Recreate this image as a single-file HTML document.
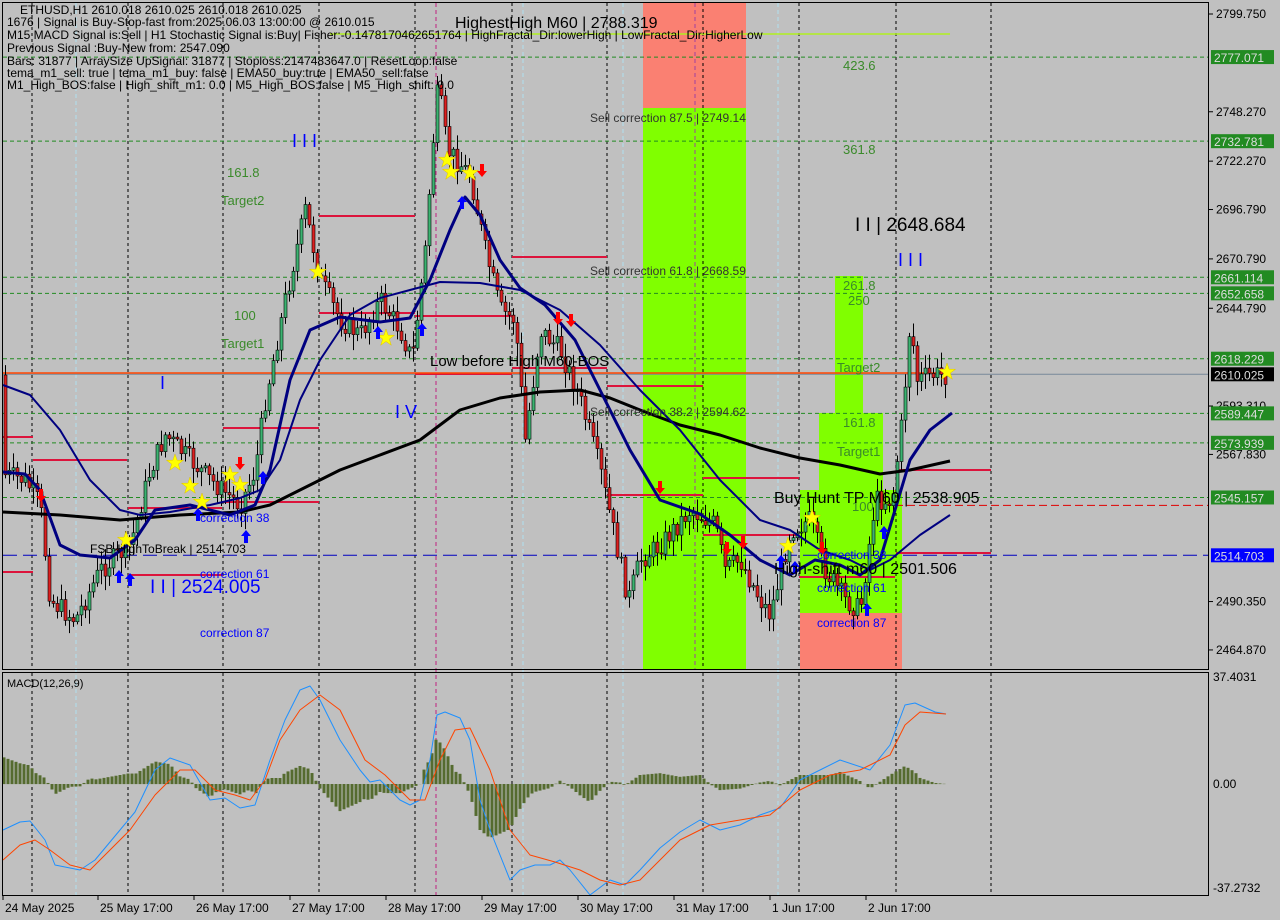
<!DOCTYPE html>
<html><head><meta charset="utf-8"><style>
html,body{margin:0;padding:0;background:#c0c0c0;}
svg{display:block;font-family:"Liberation Sans",sans-serif;}
</style></head><body>
<svg id="s" width="1280" height="920" xmlns="http://www.w3.org/2000/svg">
<rect width="1280" height="920" fill="#c0c0c0"/>
<rect x="643" y="2" width="103" height="106" fill="#fa8072"/>
<rect x="643" y="108" width="103" height="561" fill="#80ff00"/>
<rect x="835" y="276" width="28" height="137" fill="#80ff00"/>
<rect x="819" y="413" width="64" height="80" fill="#80ff00"/>
<rect x="800" y="490" width="102" height="123" fill="#80ff00"/>
<rect x="800" y="613" width="102" height="56" fill="#fa8072"/>
<g id="grid"></g>
<g id="lines"></g>
<g id="candles"></g>
<g id="over"></g>
<rect x="2.5" y="2.5" width="1206" height="667" fill="none" stroke="#000"/>
<rect x="2.5" y="672.5" width="1206" height="223" fill="none" stroke="#000"/>
<g font-size="12" fill="#000">
<text x="20" y="14">ETHUSD,H1  2610.018 2610.025 2610.018 2610.025</text>
<text x="7" y="26">1676 | Signal is Buy-Stop-fast from:2025.06.03 13:00:00 @ 2610.015</text>
<text x="7" y="39">M15 MACD Signal is:Sell | H1 Stochastic Signal is:Buy| Fisher:-0.1478170462651764 | HighFractal_Dir:lowerHigh | LowFractal_Dir:HigherLow</text>
<text x="7" y="52">Previous Signal :Buy-New from: 2547.090</text>
<text x="7" y="65">Bars: 31877 | ArraySize UpSignal: 31877 | Stoploss:2147483647.0 | ResetLoop:false</text>
<text x="7" y="77">tema_m1_sell: true | tema_m1_buy: false | EMA50_buy:true | EMA50_sell:false</text>
<text x="7" y="89">M1_High_BOS:false | High_shift_m1: 0.0 | M5_High_BOS:false | M5_High_shift: 0.0</text>
<text x="455" y="28" font-size="16">HighestHigh   M60 | 2788.319</text>
<text x="7" y="687" font-size="11">MACD(12,26,9)</text>
</g>
<g font-size="13" fill="#3a8a2a">
<text x="843" y="70">423.6</text><text x="843" y="154">361.8</text>
<text x="843" y="290">261.8</text><text x="848" y="305">250</text>
<text x="837" y="372">Target2</text><text x="843" y="427">161.8</text>
<text x="837" y="456">Target1</text><text x="852" y="511">100</text>
<text x="227" y="177">161.8</text><text x="221" y="205">Target2</text>
<text x="234" y="320">100</text><text x="221" y="348">Target1</text>
</g>
<g font-size="12" fill="#333">
<text x="590" y="122">Sell correction 87.5 | 2749.14</text>
<text x="590" y="275">Sell correction 61.8 | 2668.59</text>
<text x="590" y="416">Sell correction 38.2 | 2594.62</text>
</g>
<g fill="#000">
<text x="855" y="231" font-size="19">I I | 2648.684</text>
<text x="430" y="366" font-size="15">Low before High  M60-BOS</text>
<text x="774" y="503" font-size="16">Buy Hunt TP M60 | 2538.905</text>
<text x="774" y="574" font-size="16">High-shift m60 | 2501.506</text>
<text x="90" y="553" font-size="12">FSB-HighToBreak | 2514.703</text>
</g>
<g fill="#0000ff">
<text x="292" y="147" font-size="18">I I I</text>
<text x="898" y="266" font-size="18">I I I</text>
<text x="160" y="389" font-size="18">I</text>
<text x="395" y="418" font-size="18">I V</text>
<text x="150" y="593" font-size="19">I I | 2524.005</text>
<text x="200" y="522" font-size="12">correction 38</text>
<text x="200" y="578" font-size="12">correction 61</text>
<text x="200" y="637" font-size="12">correction 87</text>
<text x="817" y="559" font-size="12">correction 38</text>
<text x="817" y="592" font-size="12">correction 61</text>
<text x="817" y="627" font-size="12">correction 87</text>
</g>
<g id="axis" font-size="12" fill="#000"></g>
</svg>
<script>
(function(){
var NS="http://www.w3.org/2000/svg";
function el(p,t,a){var e=document.createElementNS(NS,t);for(var k in a)e.setAttribute(k,a[k]);document.getElementById(p).appendChild(e);return e;}
function Y(p){return 14+(2799.75-p)*1.899;}
[32,128,223,319,415,512,607,703,799,896,991].forEach(function(x){
 el('grid','line',{x1:x,y1:3,x2:x,y2:669,stroke:'#000','stroke-dasharray':'3,3'});
 el('grid','line',{x1:x,y1:673,x2:x,y2:895,stroke:'#000','stroke-dasharray':'3,3'});
});
[76,523,623,778].forEach(function(x){el('grid','line',{x1:x,y1:3,x2:x,y2:895,stroke:'#b0e0f0','stroke-dasharray':'4,3'});});
el('grid','line',{x1:436,y1:3,x2:436,y2:895,stroke:'#c02080','stroke-dasharray':'4,3'});
el('grid','line',{x1:695,y1:3,x2:695,y2:669,stroke:'#a040a0','stroke-dasharray':'4,3'});
var lv=[2777.071,2732.781,2661.114,2652.658,2618.229,2589.447,2573.939,2545.157];
lv.forEach(function(l){var y=Y(l);el('grid','line',{x1:3,y1:y,x2:1208,y2:y,stroke:'#228b22','stroke-dasharray':'4,3'});});
el('grid','line',{x1:3,y1:Y(2610.025),x2:1208,y2:Y(2610.025),stroke:'#778899'});
el('grid','line',{x1:3,y1:Y(2514.703),x2:1208,y2:Y(2514.703),stroke:'#0000c0','stroke-dasharray':'14,6'});
el('grid','line',{x1:330,y1:34,x2:950,y2:34,stroke:'#b0f020','stroke-width':1.5});
el('grid','line',{x1:895,y1:Y(2541),x2:1208,y2:Y(2541),stroke:'#e00000','stroke-dasharray':'8,4'});
[[3,437,33],[33,460,127],[128,575,223],[128,508,222],[223,428,319],[223,502,319],[319,216,415],[319,313,415],[415,374,512],[512,257,607],[607,386,703],[607,495,703],[703,478,799],[703,535,799],[799,577,895],[896,470,991],[896,553,991],[3,572,33],[415,316,512],[512,368,607]].forEach(function(s){
 el('lines','line',{x1:s[0],y1:s[1],x2:s[2],y2:s[1],stroke:'#dc143c','stroke-width':2});});
el('lines','line',{x1:3,y1:373,x2:948,y2:373,stroke:'#ff4500','stroke-width':1.5});
var wp=[[5,475],[25,480],[40,505],[50,600],[75,620],[100,570],[130,545],[150,470],[165,435],[190,460],[210,480],[240,505],[255,470],[265,400],[285,300],[305,210],[320,280],[340,320],[360,335],[380,300],[400,330],[412,360],[425,250],[432,150],[438,85],[447,150],[470,175],[485,250],[500,310],[515,320],[525,440],[540,330],[560,350],[580,400],[600,470],[615,540],[628,600],[640,560],[660,545],[690,510],[715,525],[725,570],[740,560],[760,600],[770,615],[790,530],[810,520],[825,570],[845,600],[860,610],[875,500],[892,500],[902,420],[910,320],[917,380],[930,375],[945,375]];
function interp(pts,x){for(var i=0;i<pts.length-1;i++){if(x>=pts[i][0]&&x<=pts[i+1][0]){var t=(x-pts[i][0])/(pts[i+1][0]-pts[i][0]);return pts[i][1]+t*(pts[i+1][1]-pts[i][1]);}}return pts[pts.length-1][1];}
var seed=7;function rnd(){seed=(seed*9301+49297)%233280;return seed/233280;}
var prev=interp(wp,4);
for(var x=5;x<=946;x+=4){
 var c=interp(wp,x)+(rnd()-0.5)*22;var o=prev;
 var hi=Math.min(o,c)-rnd()*14-2, lo=Math.max(o,c)+rnd()*14+2;
 el('candles','line',{x1:x+0.5,y1:hi,x2:x+0.5,y2:lo,stroke:'#000'});
 var bt=Math.min(o,c),bh=Math.max(1,Math.abs(c-o));
 el('candles','rect',{x:x-1,y:bt,width:3,height:bh,fill:c<o?'#3cb371':'#dc2020',stroke:'#000','stroke-width':0.6});
 prev=c;
}
function pl(pts,col,w){el('over','polyline',{points:pts.map(function(p){return p.join(',')}).join(' '),fill:'none',stroke:col,'stroke-width':w,'stroke-linejoin':'round'});}
pl([[3,512],[60,515],[120,520],[180,515],[240,512],[270,505],[300,490],[340,470],[380,455],[420,440],[460,410],[500,398],[540,392],[580,390],[610,398],[640,410],[680,425],[720,435],[760,448],[800,458],[840,465],[880,474],[910,470],[950,461]],'#000',3);
pl([[3,385],[30,395],[60,430],[90,480],[120,510],[140,515],[170,512],[210,505],[240,498],[260,490],[280,460],[300,400],[320,360],[350,315],[380,298],[410,290],[440,282],[480,283],[520,290],[560,310],[600,345],[640,390],[680,430],[720,480],[760,520],[790,530],[820,550],[850,560],[870,570],[890,560],[920,535],[950,515]],'#000080',2);
pl([[3,472],[25,474],[40,490],[60,545],[80,555],[110,558],[135,540],[155,510],[190,505],[230,515],[255,505],[270,470],[290,380],[310,330],[340,317],[380,322],[410,318],[430,280],[450,230],[465,197],[480,215],[500,260],[520,288],[545,305],[575,340],[600,390],[630,450],[660,500],[700,514],[730,535],[760,560],[790,575],[815,560],[840,565],[860,575],[880,560],[895,510],[910,460],[930,430],[952,413]],'#000080',3);
function star(cx,cy){var s='';for(var i=0;i<10;i++){var r=i%2?3.5:9,a=Math.PI/5*i-Math.PI/2;s+=(cx+r*Math.cos(a))+','+(cy+r*Math.sin(a))+' ';}el('over','polygon',{points:s,fill:'#ffff00',stroke:'#e0c000','stroke-width':0.5});}
[[175,463],[190,486],[202,502],[230,475],[240,485],[126,540],[318,272],[386,338],[447,160],[451,172],[470,173],[788,546],[812,518],[947,372]].forEach(function(p){star(p[0],p[1]);});
function arr(x,y,up,col){var d=up?'M'+x+','+(y-7)+' l-5,6 h3 v7 h4 v-7 h3 z':'M'+x+','+(y+7)+' l-5,-6 h3 v-7 h4 v7 h3 z';el('over','path',{d:d,fill:col});}
[[119,577],[130,580],[246,537],[263,478],[198,515],[422,330],[378,333],[462,203],[867,610],[884,533],[795,568],[781,562]].forEach(function(p){arr(p[0],p[1],true,'#0000ff');});
[[41,495],[240,463],[558,318],[571,320],[660,487],[727,548],[743,542],[482,170],[822,548]].forEach(function(p){arr(p[0],p[1],false,'#ff0000');});
var blue=[[3,830],[20,822],[30,821],[45,840],[55,865],[70,868],[80,870],[95,860],[120,830],[135,812],[155,770],[170,758],[190,765],[210,800],[225,798],[240,808],[255,805],[270,760],[285,720],[300,690],[310,686],[320,700],[340,740],[360,770],[370,782],[380,780],[400,800],[410,805],[420,800],[430,760],[437,715],[445,712],[460,718],[470,740],[480,800],[490,830],[510,880],[520,870],[535,865],[550,865],[560,860],[570,870],[590,895],[610,880],[625,885],[640,870],[660,848],[680,832],[700,820],[720,830],[740,825],[760,815],[780,808],[800,780],[820,770],[840,760],[870,770],[890,745],[905,705],[915,703],[935,712],[946,714]];
var orng=[[3,860],[20,845],[35,840],[50,850],[70,865],[90,870],[110,850],[130,830],[155,795],[180,770],[195,770],[215,790],[235,795],[250,800],[265,780],[280,740],[300,710],[320,695],[340,710],[365,760],[385,775],[410,800],[425,800],[440,760],[455,730],[470,728],[490,770],[510,830],[530,855],[555,862],[580,870],[600,880],[620,885],[640,880],[660,860],[680,840],[710,825],[740,820],[770,815],[800,790],[830,775],[860,770],[890,755],[905,725],[920,712],[946,714]];
for(var x=4;x<=946;x+=4){
 var h=(interp(orng,x)-interp(blue,x))*0.9;
 el('over','rect',{x:x-1.5,y:h>0?784-h:784,width:3,height:Math.abs(h)+0.1,fill:'#556b2f'});
}
pl(blue,'#1e90ff',1);pl(orng,'#ff4500',1);
var ax=[[2799.75,'2799.750'],[2748.27,'2748.270'],[2722.27,'2722.270'],[2696.79,'2696.790'],[2670.79,'2670.790'],[2644.79,'2644.790'],[2593.31,'2593.310'],[2567.83,'2567.830'],[2490.35,'2490.350'],[2464.87,'2464.870']];
ax.forEach(function(a){var y=Y(a[0]);el('axis','line',{x1:1209,y1:y,x2:1213,y2:y,stroke:'#000'});var t=el('axis','text',{x:1216,y:y+4});t.textContent=a[1];});
function box(p,txt,col){var y=Y(p);el('axis','rect',{x:1211,y:y-7,width:63,height:14,fill:col});var t=el('axis','text',{x:1214,y:y+5,fill:'#ddd'});t.textContent=txt;}
lv.forEach(function(l){box(l,l.toFixed(3),'#228b22');});
box(2610.025,'2610.025','#000');box(2514.703,'2514.703','#0000ff');
[[681,'37.4031'],[788,'0.00'],[892,'-37.2732']].forEach(function(a){var t=el('axis','text',{x:1213,y:a[0]});t.textContent=a[1];});
[[3,'24 May 2025'],[98,'25 May 17:00'],[194,'26 May 17:00'],[290,'27 May 17:00'],[386,'28 May 17:00'],[482,'29 May 17:00'],[578,'30 May 17:00'],[674,'31 May 17:00'],[770,'1 Jun 17:00'],[866,'2 Jun 17:00']].forEach(function(a){el('axis','line',{x1:a[0],y1:896,x2:a[0],y2:900,stroke:'#000'});var t=el('axis','text',{x:a[0]+2,y:912});t.textContent=a[1];});
})();
</script>
</body></html>
